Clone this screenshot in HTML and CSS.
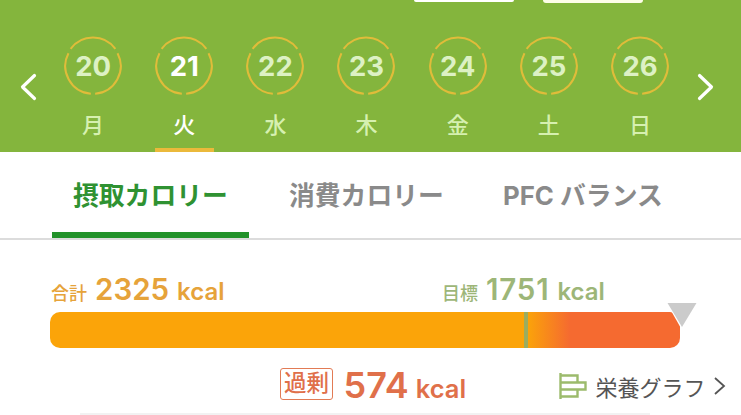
FILE: index.html
```html
<!DOCTYPE html>
<html lang="ja">
<head>
<meta charset="utf-8">
<title>摂取カロリー</title>
<link rel="stylesheet" href="styles.css">
</head>
<body>
<header class="calendar">
  <div class="top-buttons"><span class="pill pill-a"></span><span class="pill pill-b"></span></div>
  <div class="week">
    <svg class="chev" viewBox="0 0 18 28"><path d="M15.5 2.5 3.5 14l12 11.5"/></svg>
    <div class="days">
      <div class="day"><svg class="ring" viewBox="0 0 60 60"><path d="M7 18A26 26 0 0 0 28 56M32 56A26 26 0 0 0 53 18M51 14A26 26 0 0 0 9 14"/></svg><b class="num">20</b><span class="dow">月</span></div>
      <div class="day active"><svg class="ring" viewBox="0 0 60 60"><path d="M7 18A26 26 0 0 0 28 56M32 56A26 26 0 0 0 53 18M51 14A26 26 0 0 0 9 14"/></svg><b class="num">21</b><span class="dow">火</span></div>
      <div class="day"><svg class="ring" viewBox="0 0 60 60"><path d="M7 18A26 26 0 0 0 28 56M32 56A26 26 0 0 0 53 18M51 14A26 26 0 0 0 9 14"/></svg><b class="num">22</b><span class="dow">水</span></div>
      <div class="day"><svg class="ring" viewBox="0 0 60 60"><path d="M7 18A26 26 0 0 0 28 56M32 56A26 26 0 0 0 53 18M51 14A26 26 0 0 0 9 14"/></svg><b class="num">23</b><span class="dow">木</span></div>
      <div class="day"><svg class="ring" viewBox="0 0 60 60"><path d="M7 18A26 26 0 0 0 28 56M32 56A26 26 0 0 0 53 18M51 14A26 26 0 0 0 9 14"/></svg><b class="num">24</b><span class="dow">金</span></div>
      <div class="day"><svg class="ring" viewBox="0 0 60 60"><path d="M7 18A26 26 0 0 0 28 56M32 56A26 26 0 0 0 53 18M51 14A26 26 0 0 0 9 14"/></svg><b class="num">25</b><span class="dow">土</span></div>
      <div class="day"><svg class="ring" viewBox="0 0 60 60"><path d="M7 18A26 26 0 0 0 28 56M32 56A26 26 0 0 0 53 18M51 14A26 26 0 0 0 9 14"/></svg><b class="num">26</b><span class="dow">日</span></div>
    </div>
    <svg class="chev" viewBox="0 0 18 28"><path d="M2.5 2.5 14.5 14l-12 11.5"/></svg>
  </div>
</header>
<nav class="tabs">
  <div class="tab tab-intake current">摂取カロリー</div>
  <div class="tab tab-burn">消費カロリー</div>
  <div class="tab tab-pfc">PFC バランス</div>
</nav>
<main class="summary">
  <div class="totals">
    <div class="figure total"><span class="label">合計</span><b class="value">2325</b><b class="unit">kcal</b></div>
    <div class="figure goal"><span class="label">目標</span><b class="value">1751</b><b class="unit">kcal</b></div>
  </div>
  <div class="bar">
    <div class="bar-base"></div>
    <div class="bar-tick"></div>
    <svg class="marker" viewBox="0 0 32 28"><path class="marker-halo" d="M0 0h32L16 28z"/><path class="marker-fill" d="M1.5 1h29L16 25z"/></svg>
  </div>
  <div class="result">
    <div class="excess">
      <span class="badge">過剰</span><b class="excess-value">574</b><b class="excess-unit">kcal</b>
    </div>
    <a class="graph-link">
      <svg class="graph-icon" viewBox="0 0 28 26"><path d="M1.5 0v26M1.5 2.5h17v7h-17M1.5 9.5h25v7h-25M1.5 16.5h17v7h-17"/></svg>
      <span>栄養グラフ</span>
      <svg class="graph-chev" viewBox="0 0 13 20"><path d="M2 2l9 8-9 8"/></svg>
    </a>
  </div>
</main>
<div class="next-card"></div>
</body>
</html>
```
FILE: styles.css
```css
* { box-sizing: border-box; }
html, body { margin: 0; height: 415px; overflow: hidden; }
body {
  background: #fff;
  font-family: Inter, "Noto Sans CJK JP", sans-serif;
  position: relative;
}
.calendar { height: 152px; background: #84B53D; overflow: hidden; }
.top-buttons { height: 34px; display: flex; padding-left: 414px; gap: 29px; align-items: flex-start; }
.pill { display: block; width: 100px; height: 2px; background: #fff; border-radius: 0 0 4px 4px; }
.pill-b { height: 3px; background: #fdfde8; }
.week { display: flex; align-items: flex-start; height: 118px; padding-left: 19px; }
.chev { width: 18px; height: 28px; margin-top: 39px; flex: none; }
.chev path { fill: none; stroke: #fff; stroke-width: 3.2; stroke-linecap: round; stroke-linejoin: round; }
.days { display: grid; grid-template-columns: repeat(7, 91.17px); margin-left: 10.5px; margin-right: 11px; }
.day { position: relative; display: flex; flex-direction: column; align-items: center; height: 118px; }
.ring { position: absolute; left: 13.5px; top: 0; width: 64px; height: 64px; }
.ring path { fill: none; stroke: #E0BC3A; stroke-width: 1.9; }
.num { font-size: 27.5px; line-height: 32px; font-weight: 700; color: #DDF1C4; margin-top: 16px; position: relative; }
.dow { font-size: 22px; line-height: 28px; font-weight: 500; color: #D6F0B0; margin-top: 29px; }
.day.active .num, .day.active .dow { color: #fff; }
.day.active::after {
  content: ""; position: absolute; left: 16px; bottom: 0; width: 59px; height: 4px; background: #EBB93B;
}
.tabs { display: flex; height: 88px; border-bottom: 2px solid #DCDCDC; padding-left: 52px; }
.tab { height: 86px; font-size: 25.8px; line-height: 30px; font-weight: 700; padding-top: 29px; color: #8A8A8A; white-space: nowrap; }
.tab-intake { width: 197px; padding-left: 21px; }
.tab-burn { margin-left: 40px; width: 214px; }
.current { color: #2F9232; border-bottom: 6px solid #22922A; }
.summary { padding: 0 0 0 50px; }
.totals { display: flex; height: 72px; padding-top: 31px; align-items: flex-start; }
.figure { display: flex; align-items: baseline; height: 36px; line-height: 36px; white-space: nowrap; }
.total { width: 391px; color: #E6A33A; }
.goal { color: #9DB678; }
.goal .value { letter-spacing: .8px; }
.label { font-size: 18px; margin-left: 1px; margin-right: 8px; font-weight: 500; }
.value { font-size: 29.5px; line-height: 36px; font-weight: 600; }
.unit { font-size: 24px; line-height: 36px; font-weight: 600; margin-left: 8px; }
.bar { position: relative; width: 630px; height: 36px; }
.bar-base { height: 36px; border-radius: 10px; background: linear-gradient(90deg, #FBA409 0, #FBA409 477px, #F56A30 520px, #F56A30 100%); }
.bar-tick { position: absolute; left: 474px; top: 0; width: 4px; height: 36px; background: #9BAD5F; }
.marker { position: absolute; left: 616px; top: -10px; width: 32px; height: 28px; }
.marker-halo { fill: #fff; }
.marker-fill { fill: #CBCBCB; }
.result { display: flex; height: 67px; position: relative; }
.excess { display: flex; align-items: flex-start; padding-left: 230px; width: 509px; padding-top: 20px; color: #E0704A; }
.badge { width: 53px; height: 32px; border: 1.5px solid #E27B55; border-radius: 3px; font-size: 22.5px; line-height: 28px; text-align: center; font-weight: 500; white-space: nowrap; }
.excess-value { font-size: 36px; line-height: 36px; font-weight: 600; margin-left: 10.5px; margin-top: -1px; }
.excess-unit { font-size: 25.5px; line-height: 36px; font-weight: 600; margin-left: 7px; margin-top: 3px; }
.graph-link { display: flex; align-items: center; height: 27px; margin-top: 24px; font-size: 22px; color: #555; white-space: nowrap; }
.graph-icon { width: 28px; height: 26px; margin-right: 8.5px; flex: none; }
.graph-icon path { fill: none; stroke: #9CBB6C; stroke-width: 2.4; }
.graph-chev { width: 13px; height: 20px; margin-left: 7px; }
.graph-chev path { fill: none; stroke: #555; stroke-width: 1.8; }
.next-card { position: absolute; left: 80px; top: 413px; width: 570px; height: 2px; background: #F2F2F2; }
```
